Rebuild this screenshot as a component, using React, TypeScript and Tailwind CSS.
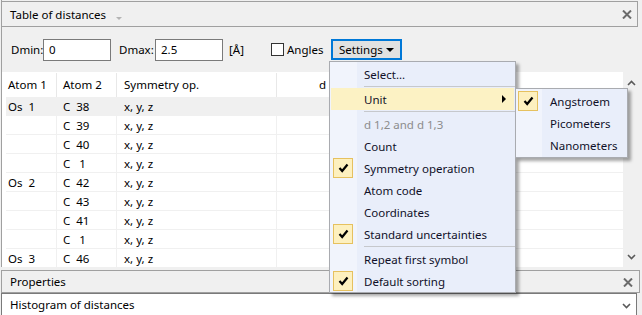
import type { ReactNode } from "react";

const rows: [string, string][] = [
  ["Os  1", "C  38"],
  ["", "C  39"],
  ["", "C  40"],
  ["", "C   1"],
  ["Os  2", "C  42"],
  ["", "C  43"],
  ["", "C  41"],
  ["", "C   1"],
  ["Os  3", "C  46"],
];

function CloseX() {
  return (
    <svg width="10" height="9" viewBox="0 0 10 9">
      <path d="M1 0.5 L9 8.5 M9 0.5 L1 8.5" stroke="#6b6b6b" strokeWidth="2" />
    </svg>
  );
}

function Chevron({ up }: { up?: boolean }) {
  return (
    <svg width="9" height="6" viewBox="0 0 9 6">
      <path
        d={up ? "M1 5 L4.5 1.5 L8 5" : "M1 1 L4.5 4.5 L8 1"}
        fill="none"
        stroke="#5a5a5a"
        strokeWidth="1.6"
      />
    </svg>
  );
}

function Tick() {
  return (
    <svg width="11" height="10" viewBox="0 0 11 10">
      <path d="M1.5 5 L4.2 8 L9.5 1.5" fill="none" stroke="#000" strokeWidth="2.2" />
    </svg>
  );
}

function CheckBox({ left = 3 }: { left?: number }) {
  return (
    <span
      className={`absolute top-[1px] flex h-[20px] w-[20px] items-center justify-center border border-[#e6c15f] bg-[#fdf0bf] ${
        left === 3 ? "left-[3px]" : "left-[2px]"
      }`}
    >
      <Tick />
    </span>
  );
}

function MenuItem({
  children,
  checked,
  disabled,
  active,
  arrow,
}: {
  children: ReactNode;
  checked?: boolean;
  disabled?: boolean;
  active?: boolean;
  arrow?: boolean;
}) {
  return (
    <div
      className={`relative flex h-[22px] items-center pt-[1px] ${
        active ? "mx-[1px] bg-[#fcf2c4] pl-[33px]" : "pl-[34px]"
      } ${disabled ? "text-[#8c8c8c]" : "text-[#101028]"}`}
    >
      {checked && <CheckBox />}
      {children}
      {arrow && (
        <span className="absolute right-[8px] top-[7px] h-0 w-0 border-y-[4px] border-l-[4px] border-y-transparent border-l-black" />
      )}
    </div>
  );
}

function Separator() {
  return (
    <div className="flex h-[3px] items-center pl-[34px]">
      <div className="h-px w-full bg-[#c6c8cc]" />
    </div>
  );
}

export default function App() {
  return (
    <div className="relative h-[315px] w-[642px] overflow-hidden bg-[#f0f0f0] font-['Noto_Sans',sans-serif] text-[11.5px] text-black">
      {/* Table of distances panel */}
      <div className="ml-[1px] flex h-[267px] w-[639px] flex-col border-l border-[#a0a0a0]">
        <div className="mt-[1px] flex h-[26px] w-[636px] shrink-0 items-center border-y border-r border-[#a0a0a0] pl-[8px] pr-[4px] pt-[1px]">
          <span>Table of distances</span>
          <span className="ml-[10px] mt-[7px] h-0 w-0 border-x-[3px] border-t-[3px] border-x-transparent border-t-[#b4b4b4]" />
          <span className="ml-auto mr-[1px] flex">
            <CloseX />
          </span>
        </div>

        <div className="flex h-[45px] shrink-0 items-center pl-[9px]">
          <span className="w-[32px] pt-[1px]">Dmin:</span>
          <div className="flex h-[22px] w-[68px] items-center border border-[#7a7a7a] bg-white pl-[5px] pt-[1px]">0</div>
          <span className="ml-[8px] w-[36px] pt-[1px]">Dmax:</span>
          <div className="flex h-[22px] w-[68px] items-center border border-[#7a7a7a] bg-white pl-[5px] pt-[1px]">2.5</div>
          <span className="ml-[6px] w-[42px] pt-[1px]">[Å]</span>
          <span className="h-[13px] w-[13px] border border-[#333] bg-white" />
          <span className="ml-[3px] w-[44px] pt-[1px]">Angles</span>
          <div className="flex h-[21px] w-[71px] items-center border-2 border-[#0078d7] bg-[#e1e1e1] pl-[6px] pt-[1px]">
            <span>Settings</span>
            <span className="ml-auto mr-[6px] h-0 w-0 border-x-[4px] border-t-[4px] border-x-transparent border-t-black" />
          </div>
        </div>

        <div className="flex h-[195px] shrink-0 overflow-hidden bg-white">
          <div className="flex-1 overflow-hidden">
            <div className="flex h-[25px] items-center pt-[1px]">
              <div className="w-[4px]" />
              <div className="flex h-full w-[51px] items-center border-r border-[#e8e8e8] pl-[2px]">Atom 1</div>
              <div className="flex h-full w-[60px] items-center border-r border-[#e8e8e8] pl-[6px]">Atom 2</div>
              <div className="flex h-full w-[160px] items-center border-r border-[#e8e8e8] pl-[7px]">Symmetry op.</div>
              <div className="flex h-full w-[56px] items-center justify-end border-r border-[#e8e8e8] pr-[6px]">d</div>
              <div className="flex-1" />
            </div>
            {rows.map(([a1, a2], i) => (
              <div key={i} className="flex h-[19px]">
                <div className="w-[4px] shrink-0" />
                <div
                  className={`flex flex-1 border-b border-[#f0f0f0] ${i === 0 ? "bg-[#f0f0f0]" : ""}`}
                >
                  <div className="flex w-[51px] items-center whitespace-pre border-r border-[#f0f0f0] pl-[2px] pt-[1px]">{a1}</div>
                  <div className="flex w-[60px] items-center whitespace-pre border-r border-[#f0f0f0] pl-[6px] pt-[1px]">{a2}</div>
                  <div className="flex w-[160px] items-center border-r border-[#f0f0f0] pl-[7px] pt-[1px]">x, y, z</div>
                  <div className="w-[56px] border-r border-[#f0f0f0]" />
                  <div className="flex-1" />
                </div>
              </div>
            ))}
          </div>
          <div className="flex w-[17px] flex-col items-center justify-between bg-[#f0f0f0] pb-[7px] pt-[8px]">
            <Chevron up />
            <Chevron />
          </div>
        </div>
      </div>

      {/* Properties panel */}
      <div className="ml-[1px] mt-[3px] flex h-[23px] w-[639px] items-center border border-[#a0a0a0] pl-[8px] pr-[6px] pt-[1px]">
        <span>Properties</span>
        <span className="ml-auto flex">
          <CloseX />
        </span>
      </div>
      <div className="ml-[1px] flex h-[24px] w-[636px] items-center border border-[#7a7a7a] bg-white pl-[8px] pr-[5px]">
        <span>Histogram of distances</span>
        <span className="ml-auto mt-[2px] flex">
          <Chevron />
        </span>
      </div>

      {/* Settings dropdown menu */}
      <div className="absolute left-[329px] top-[61px] w-[187px] border border-[#a9abb0] bg-[linear-gradient(to_right,#f1f4fc_27px,#e9eefa_27px)] pt-[1px] shadow-[3px_3px_3px_rgba(0,0,0,0.35)]">
        <MenuItem>Select...</MenuItem>
        <Separator />
        <MenuItem active arrow>Unit</MenuItem>
        <Separator />
        <MenuItem disabled>d 1,2 and d 1,3</MenuItem>
        <MenuItem>Count</MenuItem>
        <MenuItem checked>Symmetry operation</MenuItem>
        <MenuItem>Atom code</MenuItem>
        <MenuItem>Coordinates</MenuItem>
        <MenuItem checked>Standard uncertainties</MenuItem>
        <Separator />
        <MenuItem>Repeat first symbol</MenuItem>
        <MenuItem checked>Default sorting</MenuItem>
      </div>

      {/* Unit submenu */}
      <div className="absolute left-[515px] top-[88px] w-[113px] border border-[#a9abb0] bg-[linear-gradient(to_right,#f1f4fc_26px,#e9eefa_26px)] py-[1px] shadow-[3px_3px_3px_rgba(0,0,0,0.35)]">
        <div className="relative flex h-[22px] items-center pl-[34px] pt-[1px] text-[#101028]">
          <CheckBox left={2} />
          Angstroem
        </div>
        <div className="flex h-[22px] items-center pl-[34px] pt-[1px] text-[#101028]">Picometers</div>
        <div className="flex h-[22px] items-center pl-[34px] pt-[1px] text-[#101028]">Nanometers</div>
      </div>
    </div>
  );
}
